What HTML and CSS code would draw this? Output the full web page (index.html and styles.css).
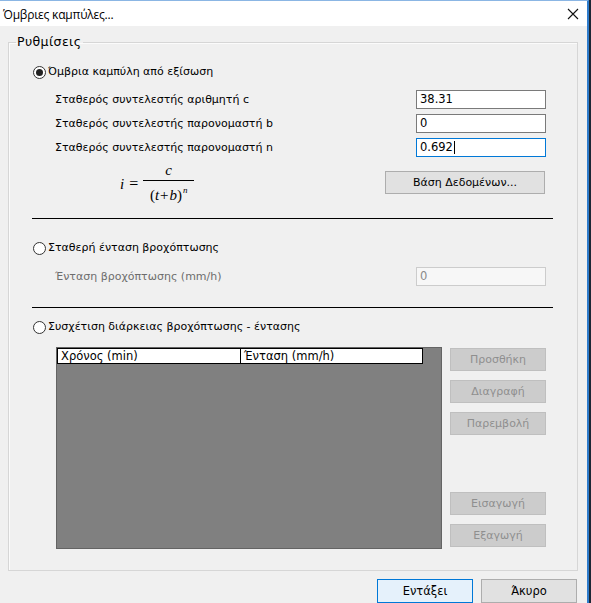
FILE: index.html
```html
<!DOCTYPE html>
<html lang="el">
<head>
<meta charset="utf-8">
<title>Όμβριες καμπύλες...</title>
<link rel="stylesheet" href="styles.css">
</head>
<body>
<div class="dialog">
  <div class="titlebar">
    <span class="title">Όμβριες καμπύλες...</span>
    <svg class="close" width="12" height="12" viewBox="0 0 12 12"><path d="M1 1 L11 11 M11 1 L1 11" stroke="#111" stroke-width="1.1" fill="none"/></svg>
  </div>
  <fieldset class="group">
    <legend>Ρυθμίσεις</legend>
    <div class="inner">
      <div class="radio-row r1"><span class="radio checked"></span><span>Όμβρια καμπύλη από εξίσωση</span></div>
      <div class="params">
        <div class="param"><span class="lbl">Σταθερός συντελεστής αριθμητή c</span><span class="input">38.31</span></div>
        <div class="param"><span class="lbl">Σταθερός συντελεστής παρονομαστή b</span><span class="input">0</span></div>
        <div class="param"><span class="lbl">Σταθερός συντελεστής παρονομαστή n</span><span class="input focus">0.692<span class="caret"></span></span></div>
      </div>
      <div class="formula-row">
        <div class="formula">
          <span class="fi">i</span><span class="eq">=</span>
          <span class="frac"><span class="num">c</span><span class="den">(<i>t</i><span class="plus">+</span><i>b</i>)<sup>n</sup></span></span>
        </div>
        <span class="btn db">Βάση Δεδομένων...</span>
      </div>
      <div class="sep s1"></div>
      <div class="radio-row r2"><span class="radio"></span><span>Σταθερή ένταση βροχόπτωσης</span></div>
      <div class="param p-dis"><span class="lbl grey">Ένταση βροχόπτωσης (mm/h)</span><span class="input disabled">0</span></div>
      <div class="sep s2"></div>
      <div class="radio-row r3"><span class="radio"></span><span>Συσχέτιση διάρκειας βροχόπτωσης - έντασης</span></div>
      <div class="grid-row">
        <div class="grid">
          <div class="ghead"><span class="gc c1">Χρόνος (min)</span><span class="gc c2">Ένταση (mm/h)</span></div>
        </div>
        <div class="side">
          <span class="btn dis b1">Προσθήκη</span>
          <span class="btn dis b2">Διαγραφή</span>
          <span class="btn dis b3">Παρεμβολή</span>
          <span class="btn dis b4">Εισαγωγή</span>
          <span class="btn dis b5">Εξαγωγή</span>
        </div>
      </div>
    </div>
  </fieldset>
  <div class="footer">
    <span class="btn fbtn default">Εντάξει</span>
    <span class="btn fbtn">Άκυρο</span>
  </div>
</div>
</body>
</html>
```
FILE: styles.css
```css
* { box-sizing: border-box; }
html, body { margin: 0; padding: 0; }
body {
  background: #1b2836;
  width: 591px;
  height: 603px;
  overflow: hidden;
  font-family: "DejaVu Sans", Verdana, sans-serif;
  font-size: 11px;
  color: #000;
}
.dialog {
  width: 589px;
  height: 603px;
  background: #f0f0f0;
  border-right: 2px solid #2f7ccc;
  border-top: 1px solid #8bb6e4;
}
.titlebar {
  height: 25px;
  background: #fff;
  display: flex;
  align-items: center;
  justify-content: space-between;
  padding: 0 8px 0 3px;
}
.title {
  font-family: "Open Sans", "Noto Sans", sans-serif;
  font-size: 12px;
  letter-spacing: -0.2px;
  margin-top: 1px;
}
.close { margin-top: 1px; }
.group {
  margin: 9px 0 0 8px;
  width: 570px;
  padding: 0;
  border: 1px solid #d6d6d6;
  box-shadow: inset 1px 1px 0 #fbfbfb;
}
.group legend {
  margin-left: 7px;
  padding: 0 2px 0 1px;
  line-height: 14px;
  font-size: 12.5px;
  letter-spacing: 0.4px;
}
.inner {
  padding: 0 0 21px 23px;
  width: 545px;
}
.radio-row {
  display: flex;
  align-items: center;
  height: 14px;
  line-height: 14px;
  gap: 2px;
}
.radio-row.r1 { margin-top: 16px; }
.radio {
  width: 13px;
  height: 13px;
  margin-left: 1px;
  border: 1px solid #333;
  border-radius: 50%;
  background: #fff;
  display: flex;
  align-items: center;
  justify-content: center;
}
.radio.checked::after {
  content: "";
  width: 7px;
  height: 7px;
  border-radius: 50%;
  background: #222;
}
.params {
  margin-top: 11px;
  display: flex;
  flex-direction: column;
  gap: 5px;
}
.param {
  display: flex;
  align-items: center;
  justify-content: space-between;
  height: 19px;
  padding-left: 23px;
  width: 514px;
}
.lbl { margin-top: -1px; }
.lbl.grey { color: #6d6d6d; }
.input {
  width: 130px;
  height: 19px;
  border: 1px solid #7a7a7a;
  background: #fff;
  padding: 0 3px;
  line-height: 17px;
  font-size: 11.5px;
  display: flex;
  align-items: center;
}
.input.focus { border-color: #0078d7; }
.caret {
  display: inline-block;
  width: 1px;
  height: 13px;
  background: #000;
  margin-left: 1px;
}
.input.disabled {
  background: #f7f7f7;
  border-color: #cccccc;
  color: #8a8a8a;
}
.formula-row {
  margin-top: 14px;
  height: 23px;
  display: flex;
  align-items: center;
  justify-content: space-between;
  width: 513px;
}
.formula {
  margin-left: 88px;
  display: flex;
  align-items: center;
  font-family: "Liberation Serif", "Times New Roman", serif;
  font-size: 15px;
  margin-top: 3px;
}
.fi { font-style: italic; font-family: "Liberation Serif", serif; }
.eq { margin: 0 5px 0 5px; font-size: 16px; }
.frac {
  display: inline-flex;
  flex-direction: column;
  align-items: center;
}
.num {
  font-style: italic;
  padding: 0 4px 2px;
  border-bottom: 1px solid #000;
  width: 51px;
  text-align: center;
  line-height: 15px;
}
.den { line-height: 19px; padding: 0 2px; white-space: nowrap; }
.den i { font-family: "Liberation Serif", serif; }
.plus { margin: 0 1px; }
.den sup { font-size: 9px; font-style: italic; vertical-align: 7px; margin-left: 1px; }
.btn {
  display: inline-flex;
  align-items: center;
  justify-content: center;
  height: 23px;
  background: #e1e1e1;
  border: 1px solid #adadad;
  font-size: 11px;
}
.btn.db { width: 160px; }
.sep {
  height: 1px;
  background: #000;
  width: 521px;
}
.sep.s1 { margin-top: 24px; }
.radio-row.r2 { margin-top: 22px; }
.param.p-dis { margin-top: 12px; }
.sep.s2 { margin-top: 21px; }
.radio-row.r3 { margin-top: 12px; }
.grid-row {
  margin-top: 13px;
  display: flex;
  gap: 8px;
  padding-left: 24px;
}
.grid {
  width: 386px;
  height: 202px;
  background: #808080;
  border: 1px solid #646464;
}
.ghead {
  display: flex;
  height: 17px;
}
.gc {
  background: #fff;
  border: 1px solid #000;
  height: 16px;
  line-height: 14px;
  padding-left: 3px;
  font-size: 11.5px;
}
.gc.c1 { width: 183px; border-right: none; }
.gc.c2 { width: 183px; }
.side {
  display: flex;
  flex-direction: column;
  padding-top: 1px;
}
.btn.dis {
  width: 96px;
  background: #cccccc;
  border-color: #bfbfbf;
  color: #8f8f8f;
}
.b2, .b3 { margin-top: 9px; }
.b4 { margin-top: 57px; }
.b5 { margin-top: 9px; }
.footer {
  display: flex;
  justify-content: flex-end;
  gap: 8px;
  margin-top: 8px;
  padding-right: 10px;
}
.btn.fbtn { width: 96px; height: 24px; font-size: 11.5px; }
.btn.default { background: #e5f1fb; border-color: #0078d7; }
```
